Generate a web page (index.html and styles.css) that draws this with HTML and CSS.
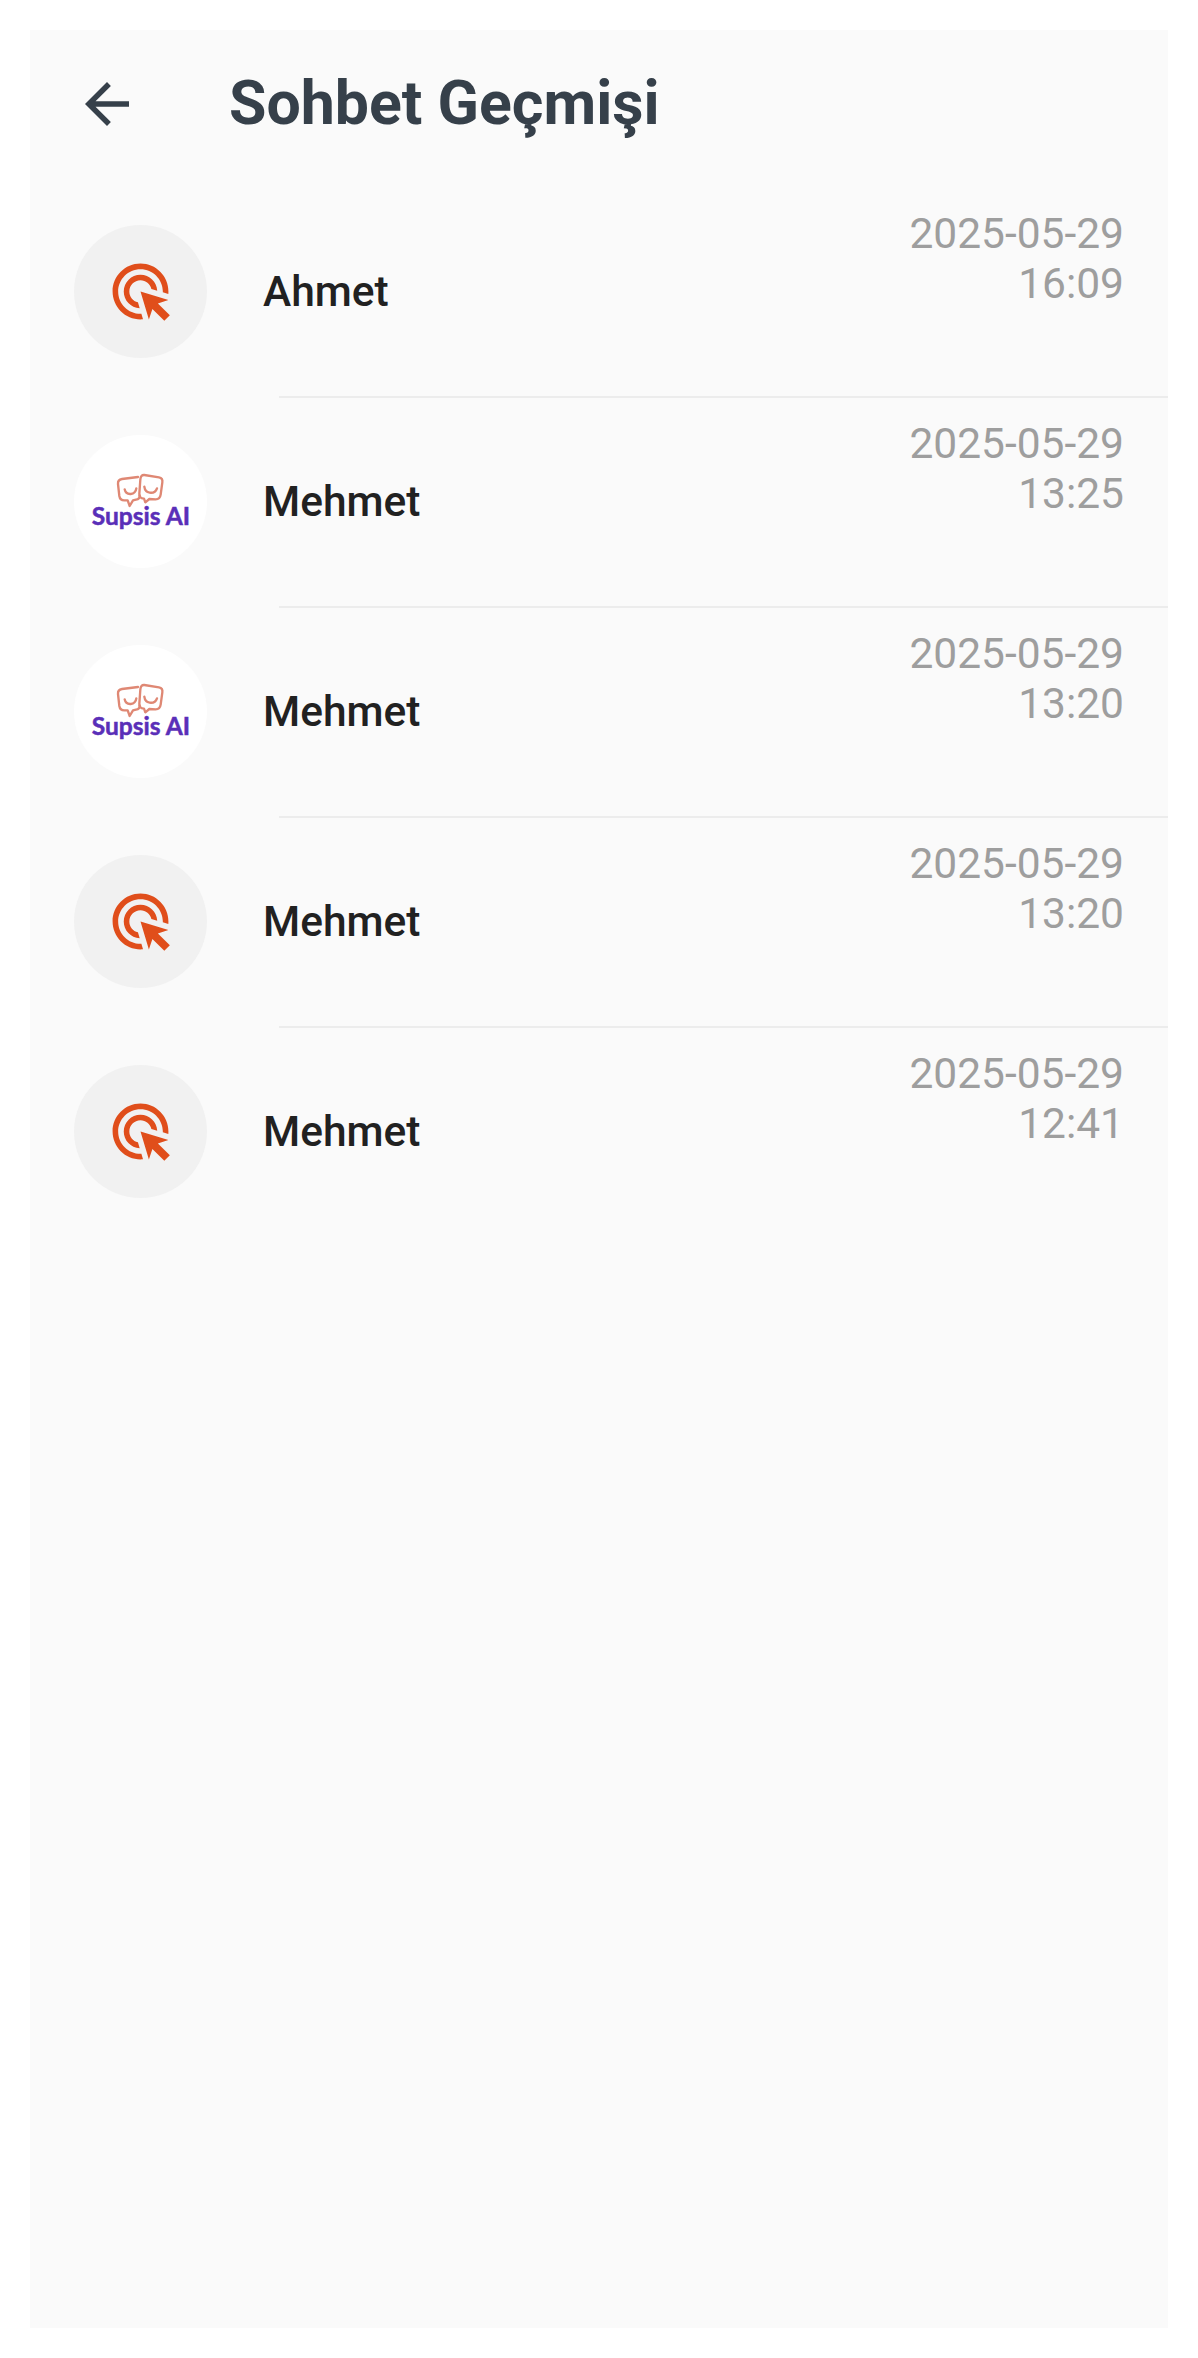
FILE: index.html
```html
<!DOCTYPE html>
<html lang="tr">
<head>
<meta charset="utf-8">
<title>Sohbet Geçmişi</title>
<link rel="stylesheet" href="styles.css">
</head>
<body>
<svg class="defs" aria-hidden="true">
  <symbol id="click" viewBox="0 0 24 24">
    <path d="M11.71 17.99C8.53 17.84 6 15.22 6 12c0-3.31 2.69-6 6-6 3.22 0 5.84 2.53 5.99 5.71l-2.1-.63C15.48 9.31 13.89 8 12 8c-2.21 0-4 1.79-4 4 0 1.89 1.31 3.48 3.08 3.89l.63 2.1zM22 12c0 .3-.01.6-.04.9l-1.97-.59c.01-.1.01-.21.01-.31 0-4.42-3.58-8-8-8s-8 3.58-8 8 3.58 8 8 8c.1 0 .21 0 .31-.01l.59 1.97c-.3.03-.6.04-.9.04C6.48 22 2 17.52 2 12S6.48 2 12 2s10 4.48 10 10zm-3.77 4.26L22 15l-10-3 3 10 1.26-3.77 4.27 4.27 1.98-1.98-4.28-4.26z"/>
  </symbol>
  <symbol id="supsis" viewBox="43 46 399 399">
    <g fill="none" stroke="#df8874" stroke-width="7" stroke-linejoin="round" stroke-linecap="round">
      <path d="M235 172 L187 178 Q174 180 175 193 L179 229 Q181 242 194 242 L204 242 L210 259 L220 242 L229 240 Q241 238 240 227"/>
      <path d="M254 166 L298 173 Q310 175 308 188 L303 225 Q301 239 288 239 L269 238 L257 248 L253 237 Q238 236 239 222 L242 180 Q243 165 254 166 Z"/>
      <path d="M195 209 Q198 224 213 223 Q228 221 230 206"/>
      <path d="M254 201 Q256 217 270 219 Q287 221 292 206"/>
    </g>
    <text class="logo-text" x="96" y="316" textLength="295" lengthAdjust="spacingAndGlyphs">Supsis AI</text>
  </symbol>
</svg>
<main class="screen">
  <header class="bar">
    <svg class="back" viewBox="0 0 24 24"><path d="M20 11H7.83l5.59-5.59L12 4l-8 8 8 8 1.41-1.41L7.83 13H20v-2z"/></svg>
    <h1 class="title">Sohbet Geçmişi</h1>
  </header>
  <ul class="chats">
    <li class="chat">
      <span class="avatar"><svg class="click"><use href="#click"/></svg></span>
      <div class="body"><span class="name">Ahmet</span><time class="time">2025-05-29<br>16:09</time></div>
    </li>
    <li class="chat">
      <span class="avatar light"><svg class="supsis"><use href="#supsis"/></svg></span>
      <div class="body"><span class="name">Mehmet</span><time class="time">2025-05-29<br>13:25</time></div>
    </li>
    <li class="chat">
      <span class="avatar light"><svg class="supsis"><use href="#supsis"/></svg></span>
      <div class="body"><span class="name">Mehmet</span><time class="time">2025-05-29<br>13:20</time></div>
    </li>
    <li class="chat">
      <span class="avatar"><svg class="click"><use href="#click"/></svg></span>
      <div class="body"><span class="name">Mehmet</span><time class="time">2025-05-29<br>13:20</time></div>
    </li>
    <li class="chat">
      <span class="avatar"><svg class="click"><use href="#click"/></svg></span>
      <div class="body"><span class="name">Mehmet</span><time class="time">2025-05-29<br>12:41</time></div>
    </li>
  </ul>
</main>
</body>
</html>
```

FILE: styles.css
```css
* { box-sizing: border-box; }
body {
  margin: 0;
  padding: 30px;
  background: #fff;
  font-family: Roboto, "Liberation Sans", sans-serif;
}
.defs { display: none; }
.screen {
  width: 1138px;
  height: 2298px;
  background: #fafafa;
}
.bar {
  display: flex;
  align-items: center;
  height: 158px;
  padding: 0 44px 10px;
}
.back {
  width: 66px;
  height: 66px;
  fill: #36404a;
}
.title {
  margin: 0 0 0 89px;
  font-size: 60.8px;
  font-weight: 700;
  line-height: 70px;
  color: #36404a;
}
.chats {
  margin: 0;
  padding: 0;
  list-style: none;
}
.chat {
  display: flex;
  align-items: center;
  height: 210px;
  padding: 0 0 0 44px;
}
.avatar {
  display: flex;
  align-items: center;
  justify-content: center;
  width: 133px;
  height: 133px;
  margin-bottom: 3px;
  border-radius: 50%;
  background: #f1f1f1;
}
.avatar.light { background: #fff; }
.click {
  width: 67px;
  height: 67px;
  fill: #e04e1b;
}
.supsis {
  width: 133px;
  height: 133px;
}
.logo-text {
  font-family: Lato, sans-serif;
  font-size: 73px;
  font-weight: 700;
  fill: #5a2fb8;
  stroke: #5a2fb8;
  stroke-width: 1.5px;
}
.body {
  display: flex;
  align-items: center;
  justify-content: space-between;
  flex: 1;
  height: 100%;
  padding: 0 44px 0 56px;
  background: linear-gradient(#ececec, #ececec) right bottom / calc(100% - 72px) 2px no-repeat;
}
.chat:last-child .body { background: none; }
.name {
  padding-bottom: 3px;
  font-size: 42.5px;
  font-weight: 500;
  color: #212121;
}
.time {
  align-self: flex-start;
  padding-top: 21px;
  font-size: 42.5px;
  line-height: 49.7px;
  text-align: right;
  color: #9e9e9e;
}
```
